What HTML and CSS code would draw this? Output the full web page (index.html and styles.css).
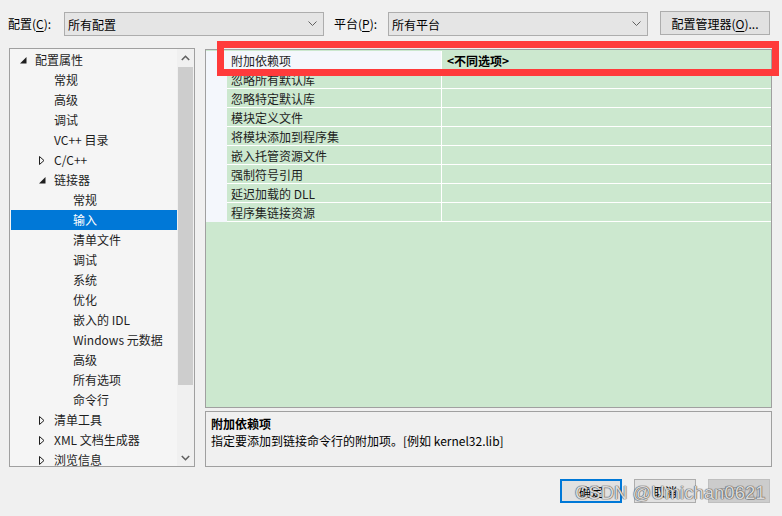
FILE: index.html
```html
<!DOCTYPE html>
<html lang="zh-CN">

<head>
    <meta charset="UTF-8">
    <meta name="viewport" content="width=device-width, initial-scale=1.0">
    <title>属性页</title>
    <link rel="stylesheet" href="styles.css">
</head>

<body>
    <div class="page">
        <!-- Configuration / platform bar -->
        <div class="topbar">
            <span class="label">配置(<u>C</u>):</span>
            <div class="combo">
                <span>所有配置</span>
                <svg class="chev" width="9" height="6" viewBox="0 0 9 6"><polyline points="0.5,0.5 4.5,4.5 8.5,0.5" fill="none" stroke="#606060" stroke-width="1"/></svg>
            </div>
            <span class="label label-platform">平台(<u>P</u>):</span>
            <div class="combo">
                <span>所有平台</span>
                <svg class="chev" width="9" height="6" viewBox="0 0 9 6"><polyline points="0.5,0.5 4.5,4.5 8.5,0.5" fill="none" stroke="#606060" stroke-width="1"/></svg>
            </div>
            <div class="btn btn-manager">配置管理器(<u>O</u>)...</div>
        </div>

        <div class="main">
            <!-- Tree of property pages -->
            <div class="tree">
                <div class="tree-list">
                    <div class="node lvl0"><span class="exp"><svg width="7" height="7" viewBox="0 0 7 7"><polygon points="0,6.5 6.5,6.5 6.5,0" fill="#1e1e1e"/></svg></span>配置属性</div>
                    <div class="node lvl1"><span class="exp"></span>常规</div>
                    <div class="node lvl1"><span class="exp"></span>高级</div>
                    <div class="node lvl1"><span class="exp"></span>调试</div>
                    <div class="node lvl1"><span class="exp"></span>VC++ 目录</div>
                    <div class="node lvl1"><span class="exp"><svg width="6" height="9" viewBox="0 0 6 9"><polygon points="0.5,0.5 5,4.5 0.5,8.5" fill="none" stroke="#1e1e1e" stroke-width="1"/></svg></span>C/C++</div>
                    <div class="node lvl1"><span class="exp"><svg width="7" height="7" viewBox="0 0 7 7"><polygon points="0,6.5 6.5,6.5 6.5,0" fill="#1e1e1e"/></svg></span>链接器</div>
                    <div class="node lvl2"><span class="exp"></span>常规</div>
                    <div class="node lvl2 selected"><span class="exp"></span>输入</div>
                    <div class="node lvl2"><span class="exp"></span>清单文件</div>
                    <div class="node lvl2"><span class="exp"></span>调试</div>
                    <div class="node lvl2"><span class="exp"></span>系统</div>
                    <div class="node lvl2"><span class="exp"></span>优化</div>
                    <div class="node lvl2"><span class="exp"></span>嵌入的 IDL</div>
                    <div class="node lvl2"><span class="exp"></span>Windows 元数据</div>
                    <div class="node lvl2"><span class="exp"></span>高级</div>
                    <div class="node lvl2"><span class="exp"></span>所有选项</div>
                    <div class="node lvl2"><span class="exp"></span>命令行</div>
                    <div class="node lvl1"><span class="exp"><svg width="6" height="9" viewBox="0 0 6 9"><polygon points="0.5,0.5 5,4.5 0.5,8.5" fill="none" stroke="#1e1e1e" stroke-width="1"/></svg></span>清单工具</div>
                    <div class="node lvl1"><span class="exp"><svg width="6" height="9" viewBox="0 0 6 9"><polygon points="0.5,0.5 5,4.5 0.5,8.5" fill="none" stroke="#1e1e1e" stroke-width="1"/></svg></span>XML 文档生成器</div>
                    <div class="node lvl1"><span class="exp"><svg width="6" height="9" viewBox="0 0 6 9"><polygon points="0.5,0.5 5,4.5 0.5,8.5" fill="none" stroke="#1e1e1e" stroke-width="1"/></svg></span>浏览信息</div>
                </div>
                <div class="scrollbar">
                    <div class="sb-btn"><svg width="9" height="6" viewBox="0 0 9 6"><polyline points="0.8,5 4.5,1.3 8.2,5" fill="none" stroke="#606060" stroke-width="1.6"/></svg></div>
                    <div class="sb-track"><div class="sb-thumb"></div></div>
                    <div class="sb-btn"><svg width="9" height="6" viewBox="0 0 9 6"><polyline points="0.8,1 4.5,4.7 8.2,1" fill="none" stroke="#606060" stroke-width="1.6"/></svg></div>
                </div>
            </div>

            <div class="right">
                <!-- Property grid -->
                <div class="grid">
                    <div class="prop first"><span class="indent"></span><span class="name">附加依赖项</span><span class="value">&lt;不同选项&gt;</span></div>
                    <div class="prop"><span class="indent"></span><span class="name">忽略所有默认库</span><span class="value"></span></div>
                    <div class="prop"><span class="indent"></span><span class="name">忽略特定默认库</span><span class="value"></span></div>
                    <div class="prop"><span class="indent"></span><span class="name">模块定义文件</span><span class="value"></span></div>
                    <div class="prop"><span class="indent"></span><span class="name">将模块添加到程序集</span><span class="value"></span></div>
                    <div class="prop"><span class="indent"></span><span class="name">嵌入托管资源文件</span><span class="value"></span></div>
                    <div class="prop"><span class="indent"></span><span class="name">强制符号引用</span><span class="value"></span></div>
                    <div class="prop"><span class="indent"></span><span class="name">延迟加载的 DLL</span><span class="value"></span></div>
                    <div class="prop"><span class="indent"></span><span class="name">程序集链接资源</span><span class="value"></span></div>
                </div>

                <!-- Description of the selected property -->
                <div class="desc">
                    <div class="desc-title">附加依赖项</div>
                    <div class="desc-text">指定要添加到链接命令行的附加项。[例如 kernel32.lib]</div>
                </div>
            </div>
        </div>

        <div class="footer">
            <div class="btn btn-default">确定</div>
            <div class="btn">取消</div>
            <div class="btn btn-disabled">应用(<u>A</u>)</div>
        </div>

        <!-- annotation and watermark lying over the dialog -->
        <div class="highlight"></div>
        <div class="watermark">CSDN @Umichan0621</div>
    </div>
</body>

</html>
```

FILE: styles.css
```css
/* Reset */
* {
    margin: 0;
    padding: 0;
    box-sizing: border-box;
}

body {
    background-color: #f0f0f0;
    font-family: "Noto Sans CJK SC", "Noto Sans", sans-serif;
    font-size: 12px;
    color: #000;
}

.page {
    width: 782px;
    height: 516px;
    position: relative;
    overflow: hidden;
}

u {
    text-decoration: underline;
    text-underline-offset: 2px;
}

/* Top bar */
.topbar {
    display: flex;
    align-items: center;
    padding: 12px 0 0 8px;
    height: 36px;
}

.label {
    width: 56px;
    line-height: 24px;
}

.label-platform {
    width: 54px;
    margin-left: 10px;
}

.combo {
    width: 260px;
    height: 24px;
    background-color: #e5e5e5;
    border: 1px solid #adadad;
    display: flex;
    align-items: center;
    justify-content: space-between;
    padding: 0 5px 0 3px;
}

.chev {
    margin-right: 1px;
}

.btn {
    width: 62px;
    height: 24px;
    background-color: #e1e1e1;
    border: 1px solid #adadad;
    display: flex;
    align-items: center;
    justify-content: center;
}

.btn-manager {
    width: 110px;
    margin-left: 12px;
    margin-top: -2px;
}

/* Main area */
.main {
    display: flex;
    margin-top: 12px;
    padding-left: 9px;
}

/* Tree */
.tree {
    width: 186px;
    height: 419px;
    border: 1px solid #a0a0a0;
    background-color: #f5f5f5;
    display: flex;
}

.tree-list {
    flex: 1;
    padding: 1px 0 0 1px;
    overflow: hidden;
}

.node {
    height: 20px;
    line-height: 20px;
    display: flex;
    align-items: center;
    white-space: nowrap;
    color: #1e1e1e;
}

.node .exp {
    width: 15px;
    flex-shrink: 0;
    display: flex;
    align-items: center;
}

.lvl0 { padding-left: 9px; }
.lvl1 { padding-left: 28px; }
.lvl2 { padding-left: 47px; }

.node.selected {
    background-color: #0078d7;
    color: #fff;
}

.scrollbar {
    width: 17px;
    background-color: #f0f0f0;
    display: flex;
    flex-direction: column;
}

.sb-btn {
    height: 17px;
    display: flex;
    align-items: center;
    justify-content: center;
}

.sb-track {
    flex: 1;
    padding: 1px 1px 0 1px;
}

.sb-thumb {
    height: 318px;
    background-color: #cdcdcd;
}

/* Right column */
.right {
    width: 567px;
    margin-left: 10px;
    padding-top: 1px;
    display: flex;
    flex-direction: column;
    gap: 3px;
}

.grid {
    height: 359px;
    border: 1px solid #a0a0a0;
    background-color: #cce8cf;
    padding-top: 1px;
}

.prop {
    display: flex;
    height: 19px;
    line-height: 19px;
}

.prop .indent {
    width: 21px;
    background-color: #f4f7fc;
}

.prop .name {
    width: 215px;
    padding-left: 4px;
    border-bottom: 1px solid #fff;
    border-right: 1px solid #fff;
    color: #1e1e1e;
}

.prop .value {
    flex: 1;
    padding-left: 5px;
    border-bottom: 1px solid #fff;
    font-weight: bold;
}

.prop.first .name {
    background-color: #f4f7fc;
}

/* Description */
.desc {
    height: 56px;
    border: 1px solid #a0a0a0;
    padding: 3px 5px;
    line-height: 17px;
}

.desc-title {
    font-weight: bold;
}

/* Footer */
.footer {
    display: flex;
    justify-content: flex-end;
    gap: 12px;
    padding: 12px 12px 0 0;
}

.btn-default {
    border: 2px solid #0078d7;
}

.btn-disabled {
    background-color: #cccccc;
    border-color: #bfbfbf;
    color: #a0a0a0;
}

/* Red annotation box */
.highlight {
    position: absolute;
    left: 217px;
    top: 41px;
    width: 562px;
    height: 35px;
    border: 7px solid #ff3b3b;
}

/* Watermark */
.watermark {
    position: absolute;
    left: 575px;
    top: 482px;
    font-family: "Liberation Sans", sans-serif;
    font-size: 18.5px;
    color: rgba(255, 255, 255, 0.8);
    text-shadow: 0 0 1px #555, 0 0 1px #555, 0 0 1px #555;
}
```
